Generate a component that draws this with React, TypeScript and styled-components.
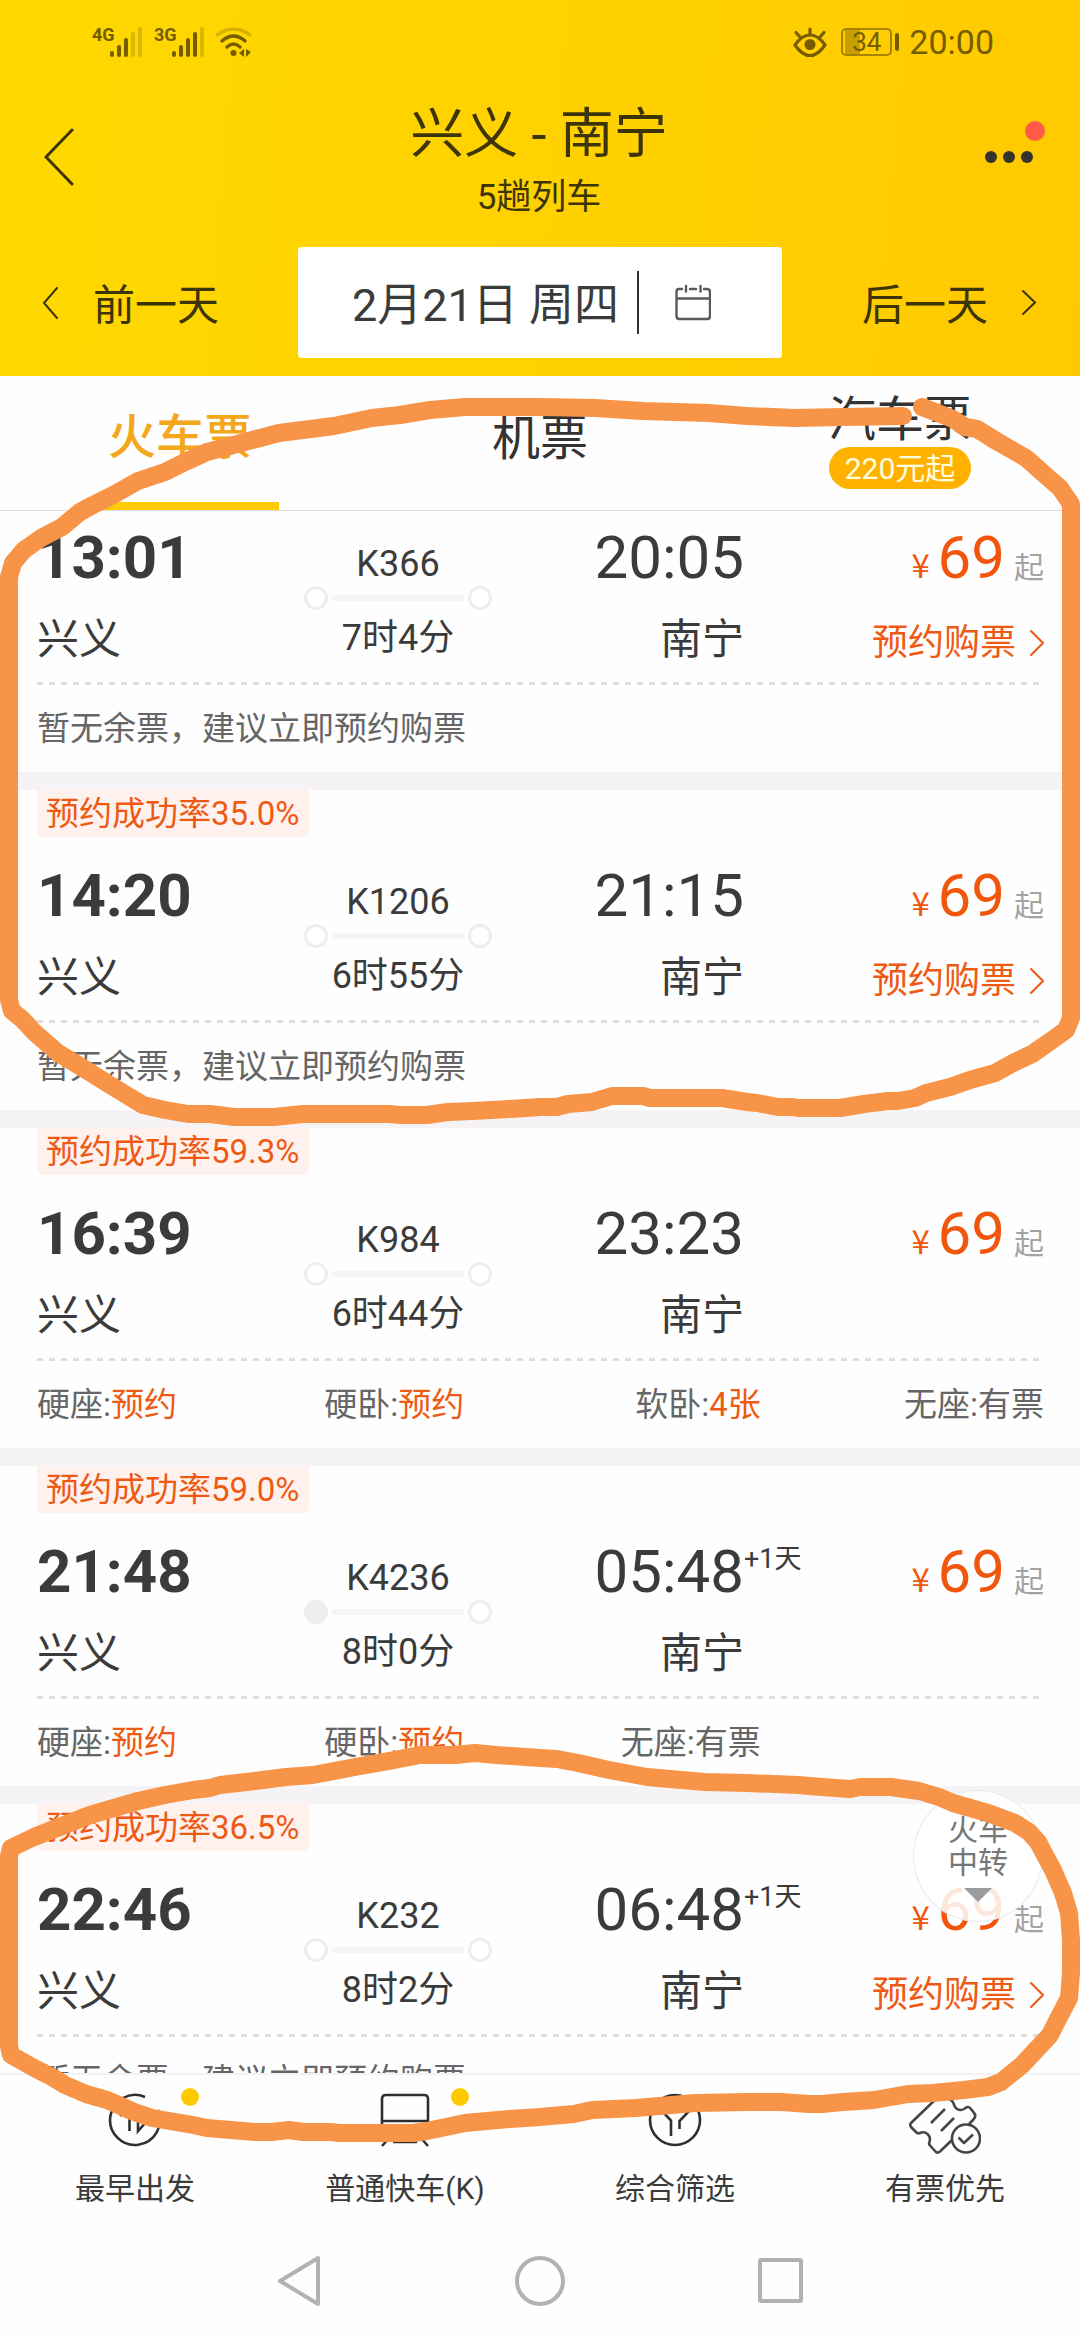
import React from "react";
import styled, { createGlobalStyle } from "styled-components";

const color = {
  ink: "#3a3b3a",
  muted: "#666666",
  faint: "#a3a3a3",
  accent: "#ee5a14",
  band: "#f6f3f7",
  marker: "#f79448",
};

const GlobalStyle = createGlobalStyle`
  * { box-sizing: border-box; }
  body {
    margin: 0;
    background: #fefefe;
    font-family: Roboto, "Noto Sans CJK SC", sans-serif;
    color: ${color.ink};
  }
  button {
    border: 0;
    padding: 0;
    background: none;
    font: inherit;
    color: inherit;
    cursor: pointer;
  }
  h1, h2, p, ul { margin: 0; padding: 0; font-weight: 400; list-style: none; }
  svg { display: block; flex: none; }
`;

const Screen = styled.div`
  position: relative;
  display: flex;
  flex-direction: column;
  height: 100vh;
  overflow: hidden;
`;

/* ---------- header ---------- */

const Header = styled.header`
  flex: none;
  padding-bottom: 18px;
  background: linear-gradient(95deg, #ffd900 0%, #ffd200 45%, #ffce00 75%, #ffc900 100%);
  color: #3d3508;
`;

const StatusBar = styled.div`
  display: flex;
  align-items: center;
  justify-content: space-between;
  height: 84px;
  padding: 0 86px 0 92px;
  color: #755c00;
`;

const StatusGroup = styled.div`
  display: flex;
  align-items: center;
  gap: 10px;
`;

const Signal = styled.div`
  display: flex;
  align-items: flex-start;
`;

const Network = styled.span`
  font-size: 18px;
  line-height: 18px;
  font-weight: 700;
  width: 18px;
`;

const Battery = styled.div`
  display: flex;
  align-items: center;
  gap: 3px;
  padding-left: 4px;
  &::after {
    content: "";
    width: 4px;
    height: 18px;
    border-radius: 2px;
    background: #755c00;
  }
`;

const BatteryBody = styled.span`
  width: 51px;
  height: 28px;
  border: 2px solid #a48400;
  border-radius: 5px;
  background: linear-gradient(90deg, transparent 2px, #c6a000 2px, #c6a000 17px, transparent 17px);
  font-size: 26px;
  line-height: 25px;
  text-align: center;
`;

const Clock = styled.span`
  font-size: 34px;
  line-height: 40px;
`;

const Toolbar = styled.div`
  display: grid;
  grid-template-columns: 1fr auto 1fr;
  align-items: center;
  height: 146px;
  padding: 0 46px 0 44px;
`;

const TitleBlock = styled.div`
  display: flex;
  flex-direction: column;
  align-items: center;
  gap: 16px;
  padding-top: 6px;
`;

const Title = styled.h1`
  font-size: 54px;
  line-height: 60px;
`;

const Subtitle = styled.p`
  font-size: 35px;
  line-height: 34px;
`;

const MoreButton = styled.button`
  position: relative;
  justify-self: end;
`;

const RedDot = styled.span`
  position: absolute;
  right: -11px;
  top: -29px;
  width: 20px;
  height: 20px;
  border-radius: 50%;
  background: #ff5a47;
`;

const DateRow = styled.div`
  display: grid;
  grid-template-columns: 1fr 484px 1fr;
  margin-top: 17px;
  height: 111px;
`;

const DayButton = styled.button<{ $end?: boolean }>`
  display: flex;
  align-items: center;
  justify-content: ${(p) => (p.$end ? "flex-end" : "flex-start")};
  gap: 34px;
  padding: 0 44px 0 42px;
  font-size: 42px;
  line-height: 48px;
`;

const DayLabel = styled.span`
  padding-top: 6px;
`;

const DateButton = styled.button`
  display: flex;
  align-items: center;
  padding-left: 54px;
  border-radius: 4px;
  background: #fff;
  color: ${color.ink};
  font-size: 45px;
  line-height: 48px;
`;

const DateDivider = styled.span`
  width: 2px;
  height: 63px;
  margin: 0 36px 0 18px;
  background: #333;
`;

/* ---------- tabs ---------- */

const Tabs = styled.nav`
  flex: none;
  display: grid;
  grid-template-columns: repeat(3, 1fr);
  height: 135px;
  border-bottom: 1px solid #dcdcdc;
  background: #fefefe;
`;

const Tab = styled.button<{ $active?: boolean; $lift: number }>`
  position: relative;
  display: flex;
  flex-direction: column;
  align-items: center;
  justify-content: center;
  padding-bottom: ${(p) => p.$lift}px;
  font-size: 48px;
  line-height: 54px;
  font-weight: ${(p) => (p.$active ? 500 : 400)};
  color: ${(p) => (p.$active ? "#f3a71c" : "#333")};
`;

const TabUnderline = styled.span`
  position: absolute;
  bottom: 0;
  left: 50%;
  width: 55%;
  height: 8px;
  transform: translateX(-50%);
  background: #ffca00;
`;

const PricePill = styled.span`
  height: 42px;
  padding: 0 16px;
  border-radius: 21px;
  background: #ffb300;
  color: #fffde0;
  font-size: 30px;
  line-height: 43px;
`;

/* ---------- train list ---------- */

const List = styled.main`
  position: relative;
  flex: 1;
  min-height: 0;
  overflow: hidden;
`;

const Card = styled.article`
  padding: 0 36px 0 37px;
  background: #fefefe;
  border-bottom: 18px solid ${color.band};
`;

const RateBadge = styled.p`
  width: fit-content;
  height: 47px;
  padding: 0 9px;
  border-radius: 0 0 6px 6px;
  background: #fff2ee;
  color: ${color.accent};
  font-size: 33px;
  line-height: 48px;
`;

const Trip = styled.div<{ $scrolled?: boolean }>`
  display: grid;
  grid-template-columns: 267fr 188fr 252fr 300fr;
  height: ${(p) => (p.$scrolled ? 171 : 183)}px;
  padding-top: ${(p) => (p.$scrolled ? 17 : 29)}px;
`;

const Column = styled.div<{ $align: string }>`
  display: flex;
  flex-direction: column;
  align-items: ${(p) => p.$align};
  gap: 31px;
`;

const Time = styled.time<{ $bold?: boolean }>`
  position: relative;
  font-size: 60px;
  line-height: 60px;
  font-weight: ${(p) => (p.$bold ? 700 : 400)};
`;

const DayOffset = styled.sup`
  position: absolute;
  left: 100%;
  top: 2px;
  font-size: 27px;
  line-height: 30px;
  white-space: nowrap;
`;

const City = styled.span`
  font-size: 42px;
  line-height: 42px;
`;

const Middle = styled.div`
  display: flex;
  flex-direction: column;
  align-items: center;
  padding-top: 18px;
  font-size: 36px;
  line-height: 36px;
`;

const Route = styled.div`
  display: flex;
  align-items: center;
  gap: 4px;
  width: 188px;
  margin: 4px 0 10px;
`;

const Stop = styled.span<{ $filled?: boolean }>`
  width: 24px;
  height: 24px;
  border: 3px solid #eeeeee;
  border-radius: 50%;
  background: ${(p) => (p.$filled ? "#eeeeee" : "#fff")};
`;

const Rail = styled.span`
  flex: 1;
  height: 6px;
  background: #f6f6f6;
`;

const Price = styled.p`
  display: flex;
  align-items: baseline;
  height: 60px;
  color: #f0570c;
  font-size: 60px;
  line-height: 60px;
`;

const Yen = styled.span`
  width: 26px;
  font-family: "Noto Sans CJK SC", sans-serif;
  font-size: 33px;
`;

const From = styled.span`
  padding-left: 9px;
  color: ${color.faint};
  font-size: 30px;
`;

const BookLink = styled.a`
  display: flex;
  align-items: center;
  gap: 14px;
  color: ${color.accent};
  font-size: 36px;
  line-height: 48px;
  text-decoration: none;
`;

const Dashes = styled.div`
  height: 3px;
  background: repeating-linear-gradient(90deg, #dedede 0 6px, transparent 6px 12px);
`;

const Foot = styled.div`
  height: 87px;
  color: ${color.muted};
  font-size: 33px;
  line-height: 87px;
`;

const Seats = styled.ul`
  display: grid;
  grid-template-columns: 287fr 216fr 220fr 283fr;
`;

const Seat = styled.li<{ $end: boolean }>`
  text-align: ${(p) => (p.$end ? "right" : "left")};
  white-space: nowrap;
`;

const SeatState = styled.span<{ $hot: boolean }>`
  color: ${(p) => (p.$hot ? color.accent : "inherit")};
`;

const TransferButton = styled.button`
  position: absolute;
  right: 37px;
  bottom: 151px;
  display: flex;
  flex-direction: column;
  align-items: center;
  width: 130px;
  height: 132px;
  padding-top: 22px;
  border: 1px solid #e8e8f4;
  border-radius: 50%;
  background: rgba(255, 255, 255, 0.85);
  color: #777;
  font-size: 30px;
  line-height: 33px;
`;

const TransferArrow = styled.span`
  margin-top: 9px;
  border: 14px solid transparent;
  border-top-color: #9b9b9d;
  border-bottom: 0;
`;

/* ---------- bottom ---------- */

const FilterBar = styled.nav`
  flex: none;
  display: grid;
  grid-template-columns: repeat(4, 1fr);
  height: 149px;
  border-top: 2px solid #f2f2f4;
  background: #fefefe;
`;

const Filter = styled.button`
  display: flex;
  flex-direction: column;
  align-items: center;
  padding-top: 15px;
  font-size: 30px;
  line-height: 36px;
`;

const FilterIcon = styled.span`
  position: relative;
  display: flex;
  justify-content: center;
  height: 81px;
  padding-top: 3px;
  color: #2e2f30;
`;

const ActiveDot = styled.span`
  position: absolute;
  left: calc(100% + 19px);
  top: -2px;
  width: 18px;
  height: 18px;
  border-radius: 50%;
  background: #ffc900;
`;

const SystemNav = styled.nav`
  flex: none;
  display: flex;
  justify-content: center;
  align-items: center;
  gap: 190px;
  height: 118px;
  background: #fefefe;
  color: #b3b1b4;
`;

const Annotation = styled.svg`
  position: absolute;
  top: 0;
  left: 0;
  width: 100%;
  pointer-events: none;
`;

/* ---------- icons ---------- */

const Bars = ({ level }: { level: number }) => (
  <svg width="34" height="32" viewBox="0 0 34 32" stroke="currentColor" strokeWidth="4" strokeLinecap="round">
    {[27, 21, 14, 8, 3].map((top, i) => (
      <path key={top} d={`M${2 + i * 7} ${top}V29`} opacity={i < level ? 1 : 0.25} />
    ))}
  </svg>
);

const Wifi = () => (
  <svg width="38" height="32" viewBox="1 0 38 32" fill="none" stroke="currentColor" strokeWidth="3.4" strokeLinecap="round">
    <path d="M2 9Q18.5-3 35 9" opacity="0.3" />
    <path d="M7 15Q18.5 5 30 15" />
    <path d="M12 21Q18.5 15 25 21" />
    <circle cx="18.5" cy="27" r="3" fill="currentColor" stroke="none" />
    <path d="M29 23v8l-5-4zM31 23l5 3-5 5z" fill="currentColor" stroke="none" />
  </svg>
);

const Eye = () => (
  <svg width="34" height="32" viewBox="0 0 34 32" fill="none" stroke="currentColor" strokeWidth="3.2" strokeLinecap="round">
    <path d="M2 19Q9 9 17 9T32 19Q25 29.5 17 29.5T2 19z" />
    <circle cx="17" cy="18.5" r="5.5" fill="currentColor" stroke="none" />
    <path d="M17 8V3M7 11L3 6.5M27 11l4-4.5" />
  </svg>
);

const Chevron = ({ w, h, stroke = 2, right = false }: { w: number; h: number; stroke?: number; right?: boolean }) => (
  <svg width={w} height={h} viewBox={`0 0 ${w} ${h}`} fill="none" stroke="currentColor" strokeWidth={stroke} strokeLinecap="round">
    <path d={right ? `M1 2L${w - 1} ${h / 2}L1 ${h - 2}` : `M${w - 2} 2L2 ${h / 2}L${w - 2} ${h - 2}`} />
  </svg>
);

const Calendar = () => (
  <svg width="36" height="37" viewBox="0 0 36 37" fill="none" stroke="#5a5a5c" strokeWidth="2.4" strokeLinecap="round">
    <path d="M7 5H4Q1.5 5 1.5 8V32Q1.5 35 4.5 35H32Q35 35 35 32V8Q35 5 32 5H29M15 5h6M1.5 14.5H35M11 2v5.5M25.5 2v5.5" />
  </svg>
);

const SortIcon = () => (
  <svg width="54" height="54" viewBox="0 0 54 54" fill="none" stroke="currentColor" strokeWidth="2.6">
    <path d="M37 4A25 25 0 1 0 50 17" />
    <path d="M12 23L21.5 14V38M30 16V38L39 28" />
  </svg>
);

const TrainIcon = () => (
  <svg width="54" height="54" viewBox="0 0 54 54" fill="none" stroke="currentColor" strokeWidth="2.6">
    <path d="M4 42V6Q4 2 8 2H46Q50 2 50 6V42H4zM4 28H50M12 44L4 53M42 44l8 9M15 49H39M12 35h4M38 35h4" />
  </svg>
);

const FilterGlyph = () => (
  <svg width="54" height="54" viewBox="0 0 54 54" fill="none" stroke="currentColor" strokeWidth="2.6">
    <circle cx="27" cy="27" r="25" />
    <path d="M14 18L23 27.5V43M41 18L31.5 28V36" />
  </svg>
);

const TicketIcon = () => (
  <svg width="72" height="62" viewBox="0 0 72 62" fill="none" stroke="#444546" strokeWidth="2.6" strokeLinejoin="round">
    <path d="M43 47L31 58.5Q28 61 26 58L21 52.5Q19.5 51 20.5 49Q22 44 18.5 41Q15 38 11 40Q8.5 41 7 39L2.5 34.5Q0 32 2.5 29.5L29 4Q33 0 37 4L43 8Q45 10 45 12Q47 17 52 17Q55 17 57 14.5Q60 13 62 16L65 20Q68 23 64 27L60 31" />
    <path d="M36 16L22 30M45 25L32 38" />
    <circle cx="57" cy="45.5" r="14" />
    <path d="M49.5 44.5L55 50L64 41.5" />
  </svg>
);

/* ---------- data ---------- */

type SeatInfo = { kind: string; state: string; hot?: boolean };
type Train = {
  no: string;
  rate?: string;
  depart: string;
  arrive: string;
  nextDay?: boolean;
  duration: string;
  passing?: boolean;
  seats?: SeatInfo[];
};

const trains: Train[] = [
  { no: "K366", depart: "13:01", arrive: "20:05", duration: "7时4分" },
  { no: "K1206", rate: "35.0%", depart: "14:20", arrive: "21:15", duration: "6时55分" },
  {
    no: "K984",
    rate: "59.3%",
    depart: "16:39",
    arrive: "23:23",
    duration: "6时44分",
    seats: [
      { kind: "硬座", state: "预约", hot: true },
      { kind: "硬卧", state: "预约", hot: true },
      { kind: "软卧", state: "4张", hot: true },
      { kind: "无座", state: "有票" },
    ],
  },
  {
    no: "K4236",
    rate: "59.0%",
    depart: "21:48",
    arrive: "05:48",
    nextDay: true,
    duration: "8时0分",
    passing: true,
    seats: [
      { kind: "硬座", state: "预约", hot: true },
      { kind: "硬卧", state: "预约", hot: true },
      { kind: "无座", state: "有票" },
    ],
  },
  { no: "K232", rate: "36.5%", depart: "22:46", arrive: "06:48", nextDay: true, duration: "8时2分" },
];

const filters = [
  { label: "最早出发", icon: <SortIcon />, active: true },
  { label: "普通快车(K)", icon: <TrainIcon />, active: true },
  { label: "综合筛选", icon: <FilterGlyph /> },
  { label: "有票优先", icon: <TicketIcon /> },
];

const TrainCard = ({ train }: { train: Train }) => (
  <Card>
    {train.rate && <RateBadge>预约成功率{train.rate}</RateBadge>}
    <Trip $scrolled={!train.rate}>
      <Column $align="flex-start">
        <Time $bold>{train.depart}</Time>
        <City>兴义</City>
      </Column>
      <Middle>
        <span>{train.no}</span>
        <Route>
          <Stop $filled={train.passing} />
          <Rail />
          <Stop />
        </Route>
        <span>{train.duration}</span>
      </Middle>
      <Column $align="flex-end">
        <Time>
          {train.arrive}
          {train.nextDay && <DayOffset>+1天</DayOffset>}
        </Time>
        <City>南宁</City>
      </Column>
      <Column $align="flex-end">
        <Price>
          <Yen>¥</Yen>69<From>起</From>
        </Price>
        {!train.seats && (
          <BookLink href="#book">
            预约购票
            <Chevron w={14} h={28} right />
          </BookLink>
        )}
      </Column>
    </Trip>
    <Dashes />
    <Foot>
      {train.seats ? (
        <Seats>
          {train.seats.map((s, i) => (
            <Seat key={s.kind} $end={i > 1}>
              {s.kind}:<SeatState $hot={!!s.hot}>{s.state}</SeatState>
            </Seat>
          ))}
        </Seats>
      ) : (
        <p>暂无余票，建议立即预约购票</p>
      )}
    </Foot>
  </Card>
);

const upperStroke =
  "M903 416L843 417L795 418L747 416L709 413L643 411L595 408L540 407L465 407L430 410L400 415L372 418L334 426L279 433L241 443L207 452L185 462L165 472L138 481L115 494L93 505L80 512L62 527L41 538L24 550L13 563L9 577V1000L12 1011L22 1019L34 1032L58 1053L83 1068L110 1085L143 1105L165 1110L188 1114H210L234 1117H274L303 1114H389L400 1115H427L448 1112L472 1111L510 1109L540 1107H557L568 1104L592 1102L612 1096H643L650 1098H722L747 1102L757 1103L778 1107H793L798 1108H840L864 1104L888 1101H898L915 1098L926 1093L950 1087L970 1080L995 1073L1015 1062L1032 1054L1048 1043L1066 1030L1071 1018V504L1060 488L1044 474L1026 458L998 442L977 429L965 427L953 419L943 415L922 407";

const lowerStroke =
  "M540 1758L496 1755L475 1753L455 1755H420L389 1761L355 1767L313 1775L286 1777L255 1781L220 1785L210 1788L193 1790L165 1795L138 1801L114 1808L90 1815L62 1826L34 1837L11 1848L9 1856V2046L11 2055L34 2068L52 2077L65 2085L86 2094L107 2100L121 2106L134 2112L152 2118L193 2125L207 2128L255 2132H272L289 2130L303 2132H331L339 2133H413L427 2131L465 2123L510 2119L540 2117L574 2114L592 2110L636 2108L695 2103L747 2102H781L809 2104H822L843 2102L874 2100L908 2094L933 2093L964 2090L988 2087L1001 2082L1022 2065L1036 2050L1050 2035L1057 2021L1069 1998L1071 1973V1940L1069 1913L1063 1893L1053 1870L1046 1857L1038 1842L1029 1832L1015 1823L988 1813L967 1807L953 1803L939 1797L919 1791L891 1787H860L850 1789L822 1787L798 1785L747 1783L705 1782L647 1777L609 1770L578 1763L557 1759Z";

export default function App() {
  return (
    <Screen>
      <GlobalStyle />
      <Header>
        <StatusBar>
          <StatusGroup>
            <Signal>
              <Network>4G</Network>
              <Bars level={3} />
            </Signal>
            <Signal>
              <Network>3G</Network>
              <Bars level={4} />
            </Signal>
            <Wifi />
          </StatusGroup>
          <StatusGroup>
            <Eye />
            <Battery>
              <BatteryBody>34</BatteryBody>
            </Battery>
            <Clock>20:00</Clock>
          </StatusGroup>
        </StatusBar>
        <Toolbar>
          <button aria-label="返回">
            <Chevron w={30} h={58} stroke={3} />
          </button>
          <TitleBlock>
            <Title>兴义 - 南宁</Title>
            <Subtitle>5趟列车</Subtitle>
          </TitleBlock>
          <MoreButton aria-label="更多">
            <svg width="50" height="14" viewBox="0 0 50 14" fill="#34332c">
              <circle cx="7" cy="7" r="6" />
              <circle cx="25" cy="7" r="6" />
              <circle cx="43" cy="7" r="6" />
            </svg>
            <RedDot />
          </MoreButton>
        </Toolbar>
        <DateRow>
          <DayButton>
            <Chevron w={17} h={34} />
            <DayLabel>前一天</DayLabel>
          </DayButton>
          <DateButton>
            <DayLabel>2月21日 周四</DayLabel>
            <DateDivider />
            <Calendar />
          </DateButton>
          <DayButton $end>
            <DayLabel>后一天</DayLabel>
            <Chevron w={14} h={27} right />
          </DayButton>
        </DateRow>
      </Header>

      <Tabs>
        <Tab $active $lift={10}>
          火车票
          <TabUnderline />
        </Tab>
        <Tab $lift={8}>机票</Tab>
        <Tab $lift={4}>
          汽车票
          <PricePill>220元起</PricePill>
        </Tab>
      </Tabs>

      <List>
        {trains.map((t) => (
          <TrainCard key={t.no} train={t} />
        ))}
        <TransferButton>
          <span>火车</span>
          <span>中转</span>
          <TransferArrow />
        </TransferButton>
      </List>

      <FilterBar>
        {filters.map((f) => (
          <Filter key={f.label}>
            <FilterIcon>
              {f.icon}
              {f.active && <ActiveDot />}
            </FilterIcon>
            {f.label}
          </Filter>
        ))}
      </FilterBar>

      <SystemNav>
        <button aria-label="后退">
          <svg width="50" height="54" viewBox="0 0 50 54" fill="none" stroke="currentColor" strokeWidth="4" strokeLinejoin="round">
            <path d="M44 4V50L6 27z" />
          </svg>
        </button>
        <button aria-label="主屏幕">
          <svg width="52" height="54" viewBox="0 0 52 54" fill="none" stroke="currentColor" strokeWidth="4">
            <circle cx="26" cy="27" r="23" />
          </svg>
        </button>
        <button aria-label="最近任务">
          <svg width="50" height="54" viewBox="0 0 50 54" fill="none" stroke="currentColor" strokeWidth="4" strokeLinejoin="round">
            <rect x="4" y="6" width="41" height="41" rx="1" />
          </svg>
        </button>
      </SystemNav>

      <Annotation viewBox="0 0 1080 2340" fill="none" stroke={color.marker} strokeWidth="18" strokeLinecap="round" strokeLinejoin="round" aria-hidden="true">
        <path d={upperStroke} />
        <path d={lowerStroke} />
      </Annotation>
    </Screen>
  );
}
